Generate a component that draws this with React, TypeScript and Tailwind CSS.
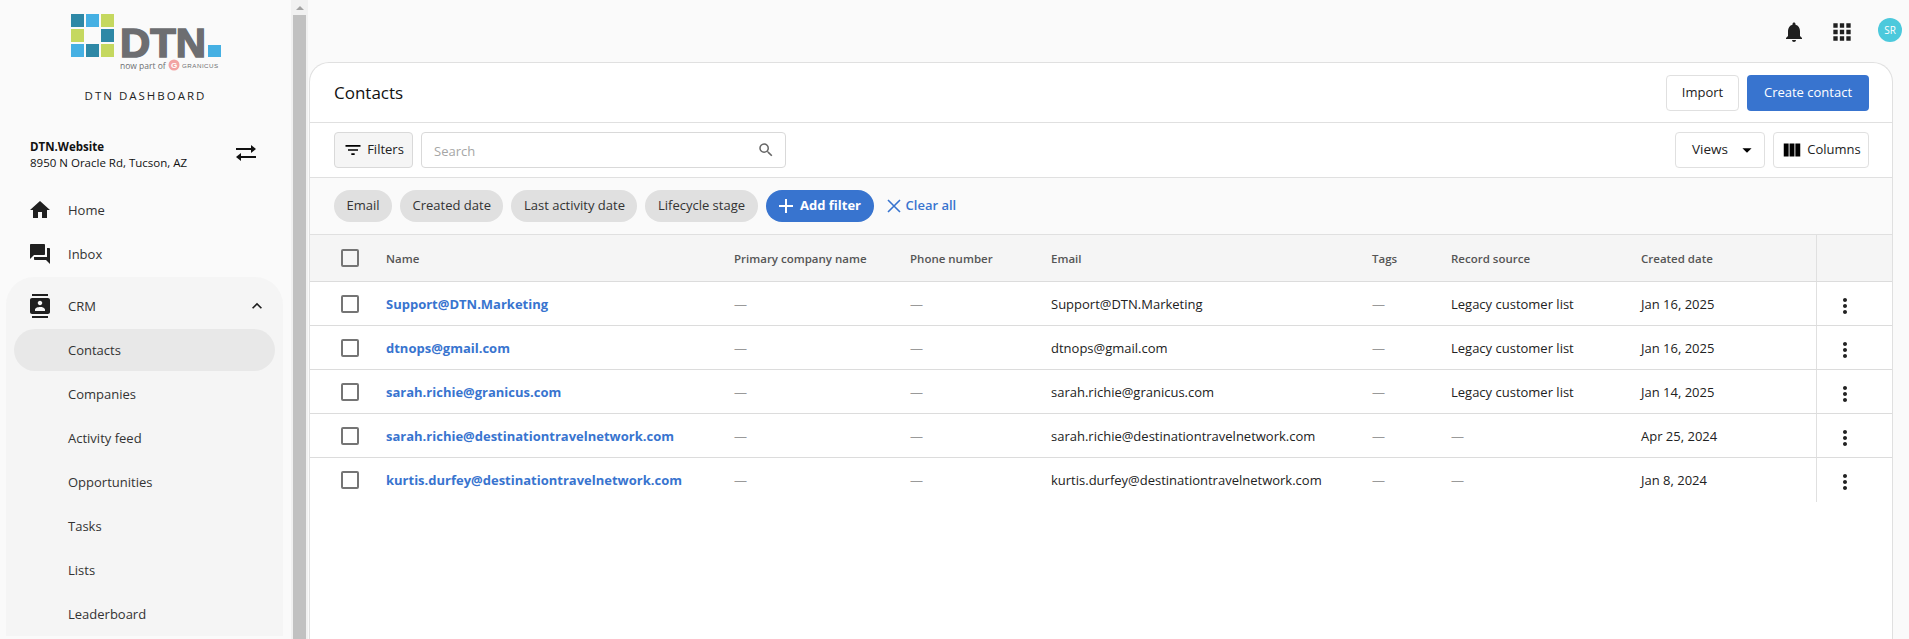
import React from "react";
import {
  MdApps,
  MdArrowDropDown,
  MdContacts,
  MdExpandLess,
  MdFilterList,
  MdForum,
  MdHome,
  MdMoreVert,
  MdNotifications,
  MdSearch,
  MdViewColumn,
} from "react-icons/md";

const subNav = ["Contacts", "Companies", "Activity feed", "Opportunities", "Tasks", "Lists", "Leaderboard"];
const chips = ["Email", "Created date", "Last activity date", "Lifecycle stage"];
const columns = ["Name", "Primary company name", "Phone number", "Email", "Tags", "Record source", "Created date"];
const gridCols = "grid grid-cols-[76px_348px_176px_141px_321px_79px_190px_175px_1fr]";

const rows = [
  { email: "Support@DTN.Marketing", source: "Legacy customer list", date: "Jan 16, 2025" },
  { email: "dtnops@gmail.com", source: "Legacy customer list", date: "Jan 16, 2025" },
  { email: "sarah.richie@granicus.com", source: "Legacy customer list", date: "Jan 14, 2025" },
  { email: "sarah.richie@destinationtravelnetwork.com", source: "—", date: "Apr 25, 2024" },
  { email: "kurtis.durfey@destinationtravelnetwork.com", source: "—", date: "Jan 8, 2024" },
];

const squares = [
  [71, 14, "#2e88a6"],
  [86, 14, "#45b0e3"],
  [101, 14, "#c5d85f"],
  [71, 29, "#c5d85f"],
  [101, 29, "#2e88a6"],
  [71, 44, "#45b0e3"],
  [86, 44, "#2e88a6"],
  [101, 44, "#c5d85f"],
] as const;

const Logo = () => (
  <svg width="291" height="76" viewBox="0 0 291 76" className="block">
    {squares.map(([x, y, fill]) => (
      <rect key={`${x}-${y}`} x={x} y={y} width="13" height="13" fill={fill} />
    ))}
    <text
      x="120"
      y="57"
      fontFamily="Liberation Sans"
      fontWeight="700"
      fontSize="41"
      textLength="86"
      lengthAdjust="spacingAndGlyphs"
      stroke="#6d6e71"
      strokeWidth="1.6"
      fill="#6d6e71"
    >
      DTN
    </text>
    <rect x="208" y="45" width="13" height="12" fill="#45b0e3" />
    <text x="120" y="69" fontFamily="Open Sans" fontSize="8.5" fill="#6d6e71">
      now part of
    </text>
    <circle cx="174" cy="65" r="5.5" fill="#f2a3a3" />
    <text x="171" y="68" fontFamily="Liberation Sans" fontWeight="700" fontSize="8" fill="#fff">
      G
    </text>
    <text x="182" y="68" fontFamily="Liberation Sans" fontSize="6.2" letterSpacing="0.5" fill="#6d6e71">
      GRANICUS
    </text>
  </svg>
);

const SwapIcon = () => (
  <svg width="20" height="16" viewBox="0 0 20 16" fill="#111" className="-mt-1">
    <rect x="0" y="3" width="18" height="2" />
    <path d="M15 0l5 4-5 4z" />
    <rect x="2" y="11" width="18" height="2" />
    <path d="M5 8l-5 4 5 4z" />
  </svg>
);

const Checkbox = () => <div className="w-[18px] h-[18px] rounded-[2px] border-2 border-[#757575]" />;

const Sidebar = () => (
  <aside className="w-[291px] shrink-0 text-[13px] text-[#333]">
    <Logo />
    <div className="h-10 flex items-center justify-center text-[11.5px] tracking-[2px] text-[#222]">DTN DASHBOARD</div>
    <div className="h-[72px] pt-1.5 pl-[30px] pr-[35px] flex items-center justify-between">
      <div className="text-[11.5px] leading-4 text-[#111]">
        <div className="font-bold">DTN.Website</div>
        <div>8950 N Oracle Rd, Tucson, AZ</div>
      </div>
      <SwapIcon />
    </div>
    <div className="h-11 pl-7 flex items-center gap-4">
      <MdHome size="24" className="text-[#1f1f1f]" />
      <span className="pt-px">Home</span>
    </div>
    <div className="h-11 pl-7 flex items-center gap-4">
      <MdForum size="24" className="text-[#1f1f1f]" />
      <span className="pt-px">Inbox</span>
    </div>
    <div className="mt-px ml-1.5 mr-2 px-2 pt-[7px] rounded-t-[28px] bg-[#f5f5f5]">
      <div className="h-11 pl-3.5 pr-2 flex items-center">
        <MdContacts size="24" className="text-[#1f1f1f]" />
        <span className="ml-4 pt-px flex-1">CRM</span>
        <MdExpandLess size="20" className="text-[#1f1f1f]" />
      </div>
      {subNav.map((item) => (
        <div key={item} className="h-11 flex items-center">
          <div className={`w-full h-[42px] pl-[54px] pt-px flex items-center rounded-full ${item === "Contacts" ? "bg-[#e8e8e8]" : ""}`}>
            {item}
          </div>
        </div>
      ))}
    </div>
  </aside>
);

const Scrollbar = () => (
  <div className="w-[17px] shrink-0 bg-[#f1f1f1] flex flex-col items-center">
    <div className="h-[15px] flex items-center">
      <div className="w-0 h-0 border-x-[4px] border-x-transparent border-b-[4px] border-b-[#a3a3a3]" />
    </div>
    <div className="w-[13px] flex-1 bg-[#c1c1c1]" />
  </div>
);

const Toolbar = () => (
  <div className="h-[55px] pl-6 pr-[23px] flex items-center border-b border-[#e0e0e0]">
    <div className="w-[79px] h-9 flex items-center justify-center gap-1 rounded border border-[#d9d9d9] bg-[#f5f5f5] text-[#222]">
      <MdFilterList size="20" className="text-black" />
      <span>Filters</span>
    </div>
    <div className="ml-2 w-[365px] h-9 pl-3 pr-2.5 flex items-center justify-between rounded border border-[#d9d9d9] bg-white text-[#a6a6a6]">
      <span className="pt-1">Search</span>
      <MdSearch size="18" className="text-[#666]" />
    </div>
    <div className="ml-auto w-[90px] h-9 pl-4 flex items-center gap-2 rounded border border-[#e0e0e0] text-[13.5px] text-[#222]">
      <span className="-mt-px">Views</span>
      <MdArrowDropDown size="22" className="text-black" />
    </div>
    <div className="ml-2 w-24 h-9 flex items-center justify-center gap-1 rounded border border-[#e0e0e0] text-[#222]">
      <MdViewColumn size="22" className="text-black" />
      <span>Columns</span>
    </div>
  </div>
);

const FilterChips = () => (
  <div className="h-[57px] px-6 flex items-center gap-2 border-b border-[#e0e0e0] bg-[#fafafa] text-[13px]">
    {chips.map((chip) => (
      <div key={chip} className="h-8 px-[12.5px] flex items-center rounded-full bg-[#e0e0e0] text-[#333]">
        {chip}
      </div>
    ))}
    <div className="h-8 w-[108px] flex items-center justify-center gap-1.5 rounded-full bg-[#3874cf] text-white font-bold">
      <svg width="16" height="16" viewBox="0 0 16 16" stroke="#fff" strokeWidth="2">
        <path d="M8 1v14M1 8h14" />
      </svg>
      <span>Add filter</span>
    </div>
    <div className="ml-1 flex items-center gap-1 text-[#3874cf] font-semibold">
      <svg width="16" height="16" viewBox="0 0 16 16" stroke="#3874cf" strokeWidth="1.6">
        <path d="M2 2l12 12M14 2L2 14" />
      </svg>
      <span>Clear all</span>
    </div>
  </div>
);

const ContactsTable = () => (
  <div className="text-[13px] text-[#222]">
    <div className={`${gridCols} h-[47px] items-center border-b border-[#dcdcdc] bg-[#f5f5f5] text-[11.5px] font-semibold text-[#555]`}>
      <div className="pl-[31px]">
        <Checkbox />
      </div>
      {columns.map((col, i) => (
        <div key={`${col}-${i}`} className="pt-0.5">
          {col}
        </div>
      ))}
      <div className="h-full border-l border-[#e0e0e0]" />
    </div>
    {rows.map((row, i) => (
      <div key={row.email} className={`${gridCols} h-11 items-center ${i < rows.length - 1 ? "border-b border-[#dcdcdc]" : ""}`}>
        <div className="pl-[31px]">
          <Checkbox />
        </div>
        <div className="pt-0.5 font-bold text-[#3874cf]">{row.email}</div>
        <div className="pt-0.5 text-[#999]">—</div>
        <div className="pt-0.5 text-[#999]">—</div>
        <div className="pt-0.5">{row.email}</div>
        <div className="pt-0.5 text-[#999]">—</div>
        <div className={row.source === "—" ? "pt-0.5 text-[#999]" : "pt-0.5"}>{row.source}</div>
        <div className="pt-0.5">{row.date}</div>
        <div className="h-full border-l border-[#e0e0e0] pl-4 pt-1 flex items-center">
          <MdMoreVert size="24" className="text-[#222]" />
        </div>
      </div>
    ))}
  </div>
);

export default function App() {
  return (
    <div className="flex h-[639px] overflow-hidden bg-[#fafafa] font-['Open_Sans',sans-serif]">
      <Sidebar />
      <Scrollbar />
      <main className="flex-1 min-w-0 flex flex-col">
        <div className="h-[62px] shrink-0 pr-[7px] flex items-start justify-end">
          <MdNotifications size="24" className="mt-5 text-[#1f1f1f]" />
          <MdApps size="26" className="ml-[23px] mt-[19px] text-[#1f1f1f]" />
          <div className="ml-[23px] mt-[18px] w-6 h-6 rounded-full bg-[#4cc9dc] flex items-center justify-center text-[10px] text-white">
            SR
          </div>
        </div>
        <section className="flex-1 ml-px mr-4 text-[13px] rounded-t-[20px] border border-b-0 border-[#e0e0e0] bg-white">
          <div className="h-[60px] pl-6 pr-[23px] flex items-center justify-between border-b border-[#e0e0e0]">
            <h1 className="text-[17px] font-medium text-[#111]">Contacts</h1>
            <div className="flex items-center gap-2">
              <button className="w-[73px] h-9 rounded border border-[#e0e0e0] bg-white text-[#222]">Import</button>
              <button className="w-[122px] h-9 rounded bg-[#3874cf] text-white">Create contact</button>
            </div>
          </div>
          <Toolbar />
          <FilterChips />
          <ContactsTable />
        </section>
      </main>
    </div>
  );
}
